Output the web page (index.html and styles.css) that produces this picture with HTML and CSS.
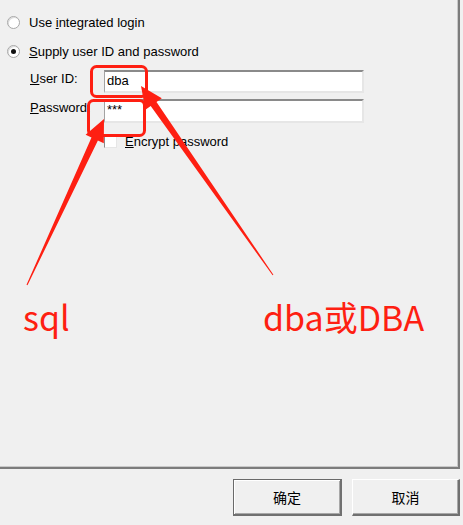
FILE: index.html
```html
<!DOCTYPE html>
<html>
<head>
<meta charset="utf-8">
<link rel="stylesheet" href="styles.css">
</head>
<body>
<div class="page">
  <div class="panel">
    <div class="opt">
      <span class="radio"></span>
      <span class="opt-label">Use <u>i</u>ntegrated login</span>
    </div>
    <div class="opt opt2">
      <span class="radio checked"></span>
      <span class="opt-label"><u>S</u>upply user ID and password</span>
    </div>
    <div class="field field1">
      <span class="flabel"><u>U</u>ser ID:</span>
      <div class="tbox">dba</div>
    </div>
    <div class="field field2">
      <span class="flabel"><u>P</u>assword:</span>
      <div class="tbox">***</div>
    </div>
    <div class="check-row">
      <span class="checkbox"></span>
      <span class="check-label"><u>E</u>ncrypt password</span>
    </div>
  </div>
  <div class="buttons">
    <button class="btn btn-default">确定</button>
    <button class="btn">取消</button>
  </div>

  <svg class="marks" width="463" height="525" viewBox="0 0 463 525">
    <rect x="91.5" y="66.5" width="55" height="30" rx="5" fill="none" stroke="#fe1f12" stroke-width="3"/>
    <rect x="88.5" y="100.5" width="56" height="35" rx="5" fill="none" stroke="#fe1f12" stroke-width="3"/>
    <polygon fill="#fe1f12" points="27.5,285.2 97.9,140.5 103.8,143.2 104,119 85.6,134.8 91.5,137.5 26.5,284.8"/>
    <polygon fill="#fe1f12" points="273.4,274.7 156.5,102 161.8,98.3 141,86 145.4,109.7 150.7,106 272.6,275.3"/>
  </svg>
  <div class="note note-sql">sql</div>
  <div class="note note-dba">dba或DBA</div>
</div>
</body>
</html>
```
FILE: styles.css
```css
html, body {
  margin: 0;
  padding: 0;
  background: #f0f0f0;
}
body {
  width: 463px;
  height: 525px;
  overflow: hidden;
  font-family: "Liberation Sans", Arial, sans-serif;
  font-size: 13px;
  color: #000;
}
.page {
  position: relative;
  width: 463px;
  height: 525px;
}
.panel {
  box-sizing: border-box;
  width: 460px;
  height: 469px;
  border-right: 2px solid #7c7c7c;
  border-bottom: 2px solid #7c7c7c;
  box-shadow: inset -1px -1px 0 #c9c9c9;
  padding-top: 14px;
  display: flex;
  flex-direction: column;
}
.opt {
  display: flex;
  align-items: center;
  height: 16px;
  padding-left: 7px;
}
.opt2 {
  margin-top: 13px;
}
.radio {
  box-sizing: border-box;
  width: 13px;
  height: 13px;
  border-radius: 50%;
  background: #fff;
  border: 1px solid #a8a8a8;
  box-shadow: inset 1px 1px 0 #dcdcdc;
  display: flex;
  align-items: center;
  justify-content: center;
}
.radio.checked::after {
  content: "";
  width: 5px;
  height: 5px;
  border-radius: 50%;
  background: #111;
}
.opt-label {
  margin-left: 9px;
  line-height: 16px;
  padding-top: 1px;
}
.field {
  display: flex;
  align-items: center;
  height: 23px;
  padding-left: 30px;
}
.field1 {
  margin-top: 11px;
}
.field2 {
  margin-top: 6px;
  height: 24px;
}
.flabel {
  width: 74px;
  align-self: flex-start;
  line-height: 18px;
}
.tbox {
  box-sizing: border-box;
  width: 260px;
  height: 100%;
  background: #fff;
  border-top: 2px solid #8a8a8a;
  border-left: 1px solid #a3a3a3;
  border-right: 2px solid #e6e6e6;
  border-bottom: 2px solid #e6e6e6;
  padding-left: 2px;
  line-height: 17px;
}
.check-row {
  display: flex;
  align-items: center;
  height: 14px;
  margin-top: 11px;
  padding-left: 104px;
}
.checkbox {
  box-sizing: border-box;
  width: 13px;
  height: 13px;
  background: #fff;
  border-top: 1px solid #8a8a8a;
  border-left: 1px solid #8a8a8a;
  border-right: 1px solid #e6e6e6;
  border-bottom: 1px solid #e6e6e6;
}
.check-label {
  margin-left: 8px;
}
.buttons {
  display: flex;
  justify-content: flex-end;
  gap: 10px;
  margin-top: 10px;
  padding-right: 3px;
}
.btn {
  box-sizing: border-box;
  height: 37px;
  width: 108px;
  margin: 0;
  padding: 0;
  background: #f0f0f0;
  font-family: "Noto Sans CJK SC", "Liberation Sans", sans-serif;
  font-size: 14px;
  color: #000;
  border-top: 1px solid #ffffff;
  border-left: 1px solid #ffffff;
  border-right: 2px solid #707070;
  border-bottom: 2px solid #707070;
  box-shadow: inset -1px -1px 0 #a8a8a8;
}
.btn-default {
  width: 109px;
  border-top: 1px solid #6a6a6a;
  border-left: 1px solid #6a6a6a;
  box-shadow: inset 1px 1px 0 #ffffff, inset -1px -1px 0 #a8a8a8;
}
.marks {
  position: absolute;
  left: 0;
  top: 0;
  pointer-events: none;
}
.note {
  position: absolute;
  font-family: "Noto Sans CJK SC", "Liberation Sans", sans-serif;
  font-size: 34px;
  line-height: 40px;
  color: #fe1f12;
}
.note-sql {
  left: 23px;
  top: 297px;
}
.note-dba {
  left: 263px;
  top: 297px;
}
```
